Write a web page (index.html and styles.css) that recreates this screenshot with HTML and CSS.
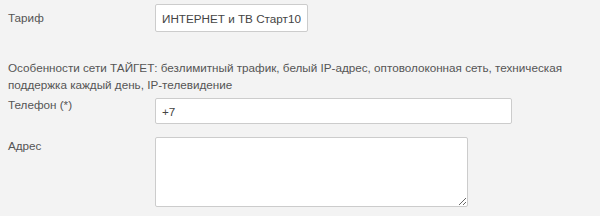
FILE: index.html
```html
<!DOCTYPE html>
<html>
<head>
<meta charset="utf-8">
<link rel="stylesheet" href="styles.css">
</head>
<body>
<form class="form">
  <div class="row row-tariff">
    <label class="label">Тариф</label>
    <input class="field field-tariff" type="text" value="ИНТЕРНЕТ и ТВ Старт100">
  </div>
  <p class="note">Особенности сети ТАЙГЕТ: безлимитный трафик, белый IP-адрес, оптоволоконная сеть, техническая поддержка каждый день, IP-телевидение</p>
  <div class="row row-phone">
    <label class="label">Телефон (*)</label>
    <input class="field field-phone" type="text" value="+7">
  </div>
  <div class="row row-address">
    <label class="label">Адрес</label>
    <textarea class="field field-address"></textarea>
  </div>
</form>
</body>
</html>
```
FILE: styles.css
```css
html, body {
  margin: 0;
  padding: 0;
  background: #f3f3f3;
}
body {
  font-family: "Liberation Sans", Arial, sans-serif;
  font-size: 11.7px;
  color: #555;
}
.form {
  padding: 4px 0 0 8px;
}
.row {
  display: flex;
  align-items: flex-start;
}
.label {
  width: 147px;
  flex: none;
  line-height: 17px;
  padding-top: 5px;
}
.field {
  box-sizing: border-box;
  border: 1px solid #ccc;
  border-radius: 2px;
  background: #fff;
  font-family: "Liberation Sans", Arial, sans-serif;
  font-size: 11.7px;
  color: #444;
  margin: 0;
  padding: 0 6px;
  outline: none;
}
.field-tariff {
  width: 153px;
  height: 28px;
}
.note {
  margin: 27px 0 0 0;
  line-height: 17px;
  width: 570px;
}
.row-phone {
  margin-top: 5px;
}
.row-phone .label {
  padding-top: 0;
  margin-top: -2px;
}
.field-phone {
  width: 357px;
  height: 26px;
}
.row-address {
  margin-top: 13px;
}
.row-address .label {
  padding-top: 0;
}
.field-address {
  width: 313px;
  height: 70px;
  resize: both;
}
```
